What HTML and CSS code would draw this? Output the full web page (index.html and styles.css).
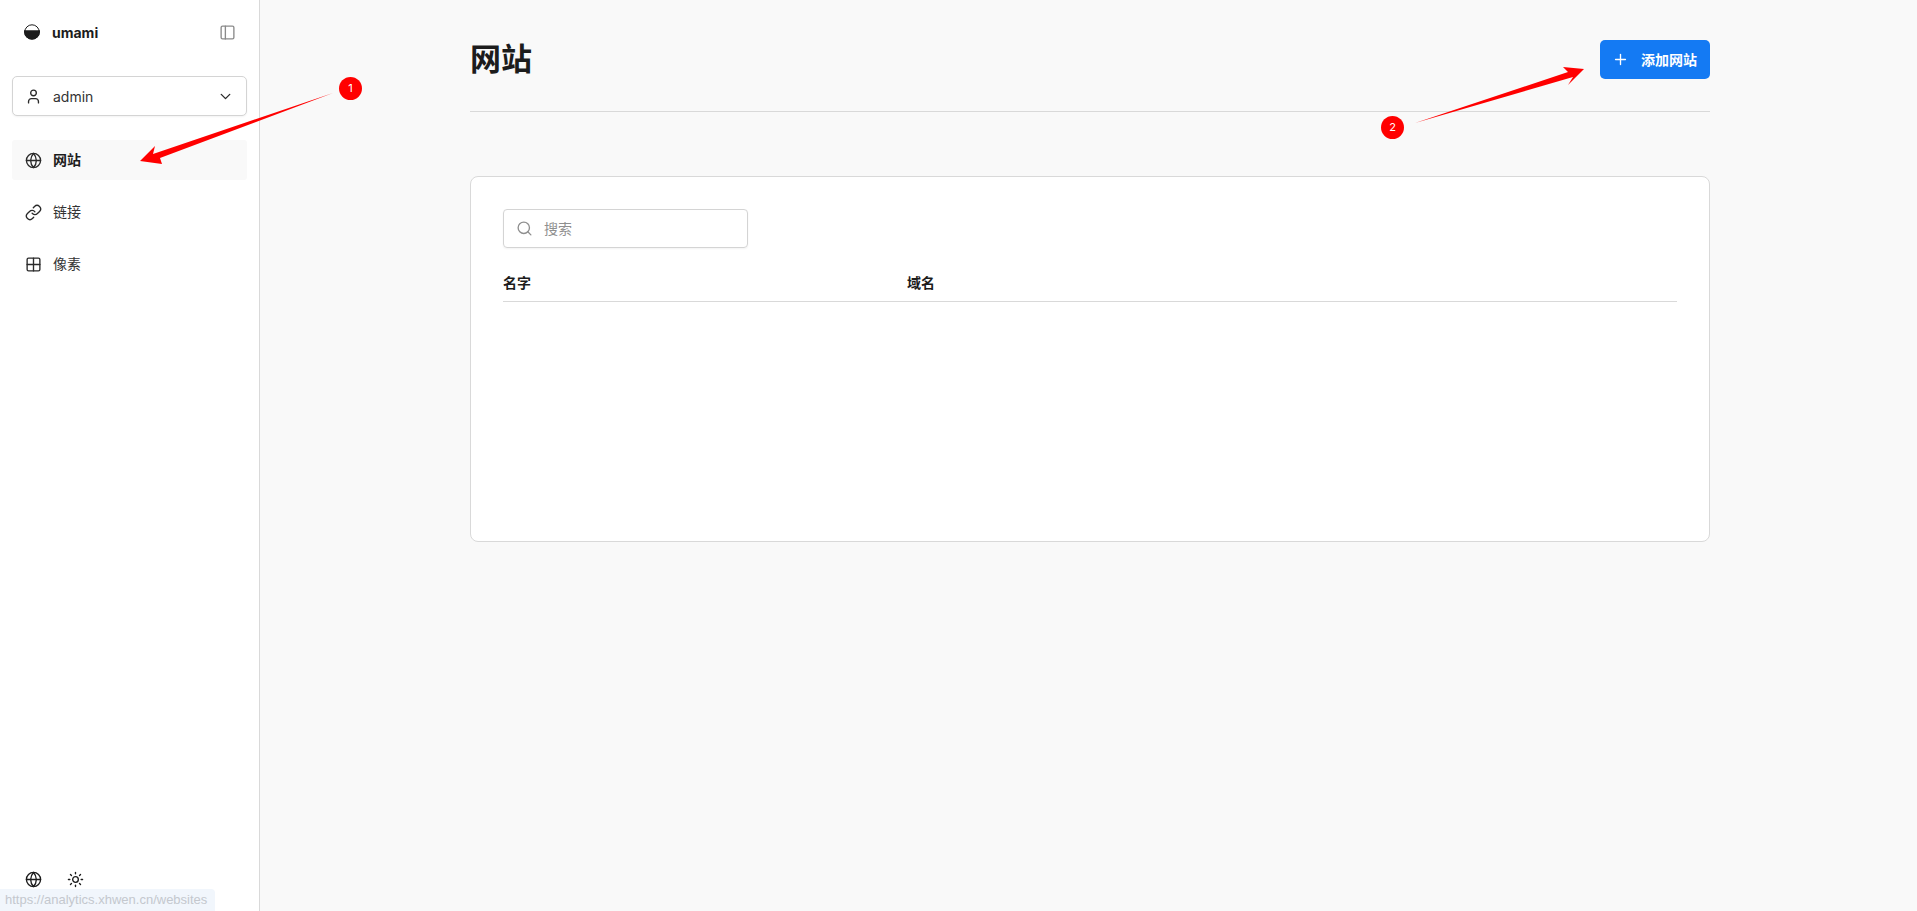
FILE: index.html
```html
<!DOCTYPE html>
<html lang="zh-CN">
<head>
<meta charset="utf-8">
<title>umami</title>
<link rel="stylesheet" href="styles.css">
</head>
<body>
<div class="app">
  <aside class="sidebar">
    <div class="brand">
      <div class="brand-name">
        <svg class="logo" viewBox="0 0 16 16"><circle cx="8" cy="8" r="7.2" fill="none" stroke="#1c1c1c" stroke-width="1"/><path d="M0 6.2H16V8A8 7.4 0 0 1 0 8Z" fill="#1c1c1c"/></svg>
        <span>umami</span>
      </div>
      <svg class="icon icon-muted" viewBox="0 0 24 24"><rect x="3" y="3" width="18" height="18" rx="2"/><path d="M9 3v18"/></svg>
    </div>
    <div class="selector">
      <svg class="icon" viewBox="0 0 24 24"><path d="M19 21v-2a4 4 0 0 0-4-4H9a4 4 0 0 0-4 4v2"/><circle cx="12" cy="7" r="4"/></svg>
      <span class="selector-name">admin</span>
      <svg class="icon" viewBox="0 0 24 24"><path d="m6 9 6 6 6-6"/></svg>
    </div>
    <nav class="nav">
      <a class="nav-item active">
        <svg class="icon" viewBox="0 0 24 24"><circle cx="12" cy="12" r="10"/><path d="M12 2a14.5 14.5 0 0 0 0 20 14.5 14.5 0 0 0 0-20"/><path d="M2 12h20"/></svg>
        <span class="label">网站</span>
      </a>
      <a class="nav-item">
        <svg class="icon" viewBox="0 0 24 24"><path d="M10 13a5 5 0 0 0 7.54.54l3-3a5 5 0 0 0-7.07-7.07l-1.72 1.71"/><path d="M14 11a5 5 0 0 0-7.54-.54l-3 3a5 5 0 0 0 7.07 7.07l1.71-1.71"/></svg>
        <span class="label">链接</span>
      </a>
      <a class="nav-item">
        <svg class="icon" viewBox="0 0 24 24"><rect x="3" y="3" width="18" height="18" rx="2"/><path d="M3 12h18"/><path d="M12 3v18"/></svg>
        <span class="label">像素</span>
      </a>
    </nav>
    <div class="sidebar-foot">
      <svg class="icon icon-dark" viewBox="0 0 24 24"><circle cx="12" cy="12" r="10"/><path d="M12 2a14.5 14.5 0 0 0 0 20 14.5 14.5 0 0 0 0-20"/><path d="M2 12h20"/></svg>
      <svg class="icon icon-dark" viewBox="0 0 24 24"><circle cx="12" cy="12" r="4"/><path d="M12 2v2"/><path d="M12 20v2"/><path d="m4.93 4.93 1.41 1.41"/><path d="m17.66 17.66 1.41 1.41"/><path d="M2 12h2"/><path d="M20 12h2"/><path d="m6.34 17.66-1.41 1.41"/><path d="m19.07 4.93-1.41 1.41"/></svg>
    </div>
  </aside>
  <main class="main">
    <div class="container">
      <header class="page-head">
        <h1 class="page-title">网站</h1>
        <button class="add-btn">
          <svg class="icon icon-white" viewBox="0 0 24 24"><path d="M5 12h14"/><path d="M12 5v14"/></svg>
          <span class="label">添加网站</span>
        </button>
      </header>
      <section class="card">
        <div class="search">
          <svg class="icon icon-grey" viewBox="0 0 24 24"><circle cx="11" cy="11" r="8"/><path d="m21 21-4.3-4.3"/></svg>
          <span class="label">搜索</span>
        </div>
        <div class="table-head">
          <div>名字</div>
          <div>域名</div>
        </div>
      </section>
    </div>
  </main>
</div>
<div class="status-bubble">https://analytics.xhwen.cn/websites</div>
<svg class="annotations" viewBox="0 0 1917 911">
  <polygon fill="#ff0000" points="333,93 160,158 162,164 140,161 155,146 153,154"/>
  <polygon fill="#ff0000" points="1415,123 1568,72 1563,67 1584,69 1568,85 1573,77"/>
</svg>
<div class="badge badge-one">1</div>
<div class="badge badge-two">2</div>
</body>
</html>
```
FILE: styles.css
```css
* { box-sizing: border-box; }
html, body { margin: 0; height: 100%; overflow: hidden; }
body {
  font-family: Inter, "Noto Sans CJK SC", sans-serif;
  font-size: 14px;
  color: #1c1c1c;
  background: #f9f9f9;
}
.app { display: flex; height: 911px; }

.icon {
  width: 17px;
  height: 17px;
  flex: none;
  fill: none;
  stroke: #2a2a2a;
  stroke-width: 1.9;
  stroke-linecap: round;
  stroke-linejoin: round;
}
.icon-muted { stroke: #8a8a8a; }
.icon-dark { stroke: #1c1c1c; }
.icon-grey { stroke: #8f8f8f; }
.icon-white { stroke: #fff; }
.label { padding-bottom: 2px; white-space: nowrap; }

.sidebar {
  width: 260px;
  flex: none;
  display: flex;
  flex-direction: column;
  padding: 0 12px;
  background: #fff;
  border-right: 1px solid #d9d9d9;
}
.brand {
  height: 64px;
  display: flex;
  align-items: center;
  justify-content: space-between;
  padding: 0 11px 0 12px;
}
.brand-name {
  display: flex;
  align-items: center;
  gap: 12px;
  font-weight: 700;
  font-size: 14px;
}
.logo { width: 16px; height: 16px; flex: none; }
.selector {
  margin-top: 12px;
  height: 40px;
  display: flex;
  align-items: center;
  gap: 11px;
  padding: 0 12px;
  background: #fff;
  border: 1px solid #d4d4d4;
  border-radius: 5px;
  box-shadow: 0 1px 2px rgba(0, 0, 0, .05);
}
.selector-name { flex: 1; color: #333; }
.nav {
  margin-top: 24px;
  display: flex;
  flex-direction: column;
  gap: 12px;
}
.nav-item {
  height: 40px;
  display: flex;
  align-items: center;
  gap: 11px;
  padding: 0 13px;
  color: #333;
  border-radius: 3px;
}
.nav-item.active { background: #f9f9f9; font-weight: 700; color: #1c1c1c; }
.sidebar-foot {
  margin-top: auto;
  display: flex;
  gap: 25px;
  padding: 0 13px 23px;
}

.main { flex: 1; padding-left: 210px; }
.container { width: 1240px; }
.page-head {
  height: 112px;
  padding-top: 39px;
  display: flex;
  justify-content: space-between;
  align-items: flex-start;
  border-bottom: 1px solid #d9d9d9;
}
.page-title {
  margin: 0;
  font-size: 31px;
  line-height: 40px;
  font-weight: 700;
  color: #1c1c1c;
}
.add-btn {
  width: 110px;
  height: 39px;
  margin-top: 1px;
  display: flex;
  align-items: center;
  gap: 12px;
  padding: 0 12px;
  border: 0;
  border-radius: 5px;
  background: #147af3;
  color: #fff;
  font: 700 14px Inter, "Noto Sans CJK SC", sans-serif;
}
.card {
  margin-top: 64px;
  height: 366px;
  padding: 32px;
  background: #fff;
  border: 1px solid #d9d9d9;
  border-radius: 8px;
}
.search {
  width: 245px;
  height: 39px;
  display: flex;
  align-items: center;
  gap: 11px;
  padding: 0 12px;
  color: #8f8f8f;
  border: 1px solid #d4d4d4;
  border-radius: 4px;
  box-shadow: 0 1px 2px rgba(0, 0, 0, .05);
}
.table-head {
  margin-top: 14px;
  height: 40px;
  display: grid;
  grid-template-columns: 404px 1fr;
  align-items: center;
  font-weight: 700;
  border-bottom: 1px solid #d9d9d9;
}

.status-bubble {
  position: absolute;
  left: 0;
  bottom: 0;
  width: 215px;
  height: 22px;
  padding-left: 5px;
  line-height: 22px;
  font-family: "Liberation Sans", sans-serif;
  font-size: 13px;
  color: #c4c8ce;
  background: #f1f6fc;
  border-top-right-radius: 4px;
  white-space: nowrap;
}
.annotations {
  position: absolute;
  left: 0;
  top: 0;
  width: 1917px;
  height: 911px;
  pointer-events: none;
}
.badge {
  position: absolute;
  width: 23px;
  height: 23px;
  border-radius: 50%;
  background: #ff0000;
  color: #fff;
  font-size: 11px;
  line-height: 23px;
  text-align: center;
}
.badge-one { left: 339px; top: 77px; }
.badge-two { left: 1381px; top: 116px; }
```
